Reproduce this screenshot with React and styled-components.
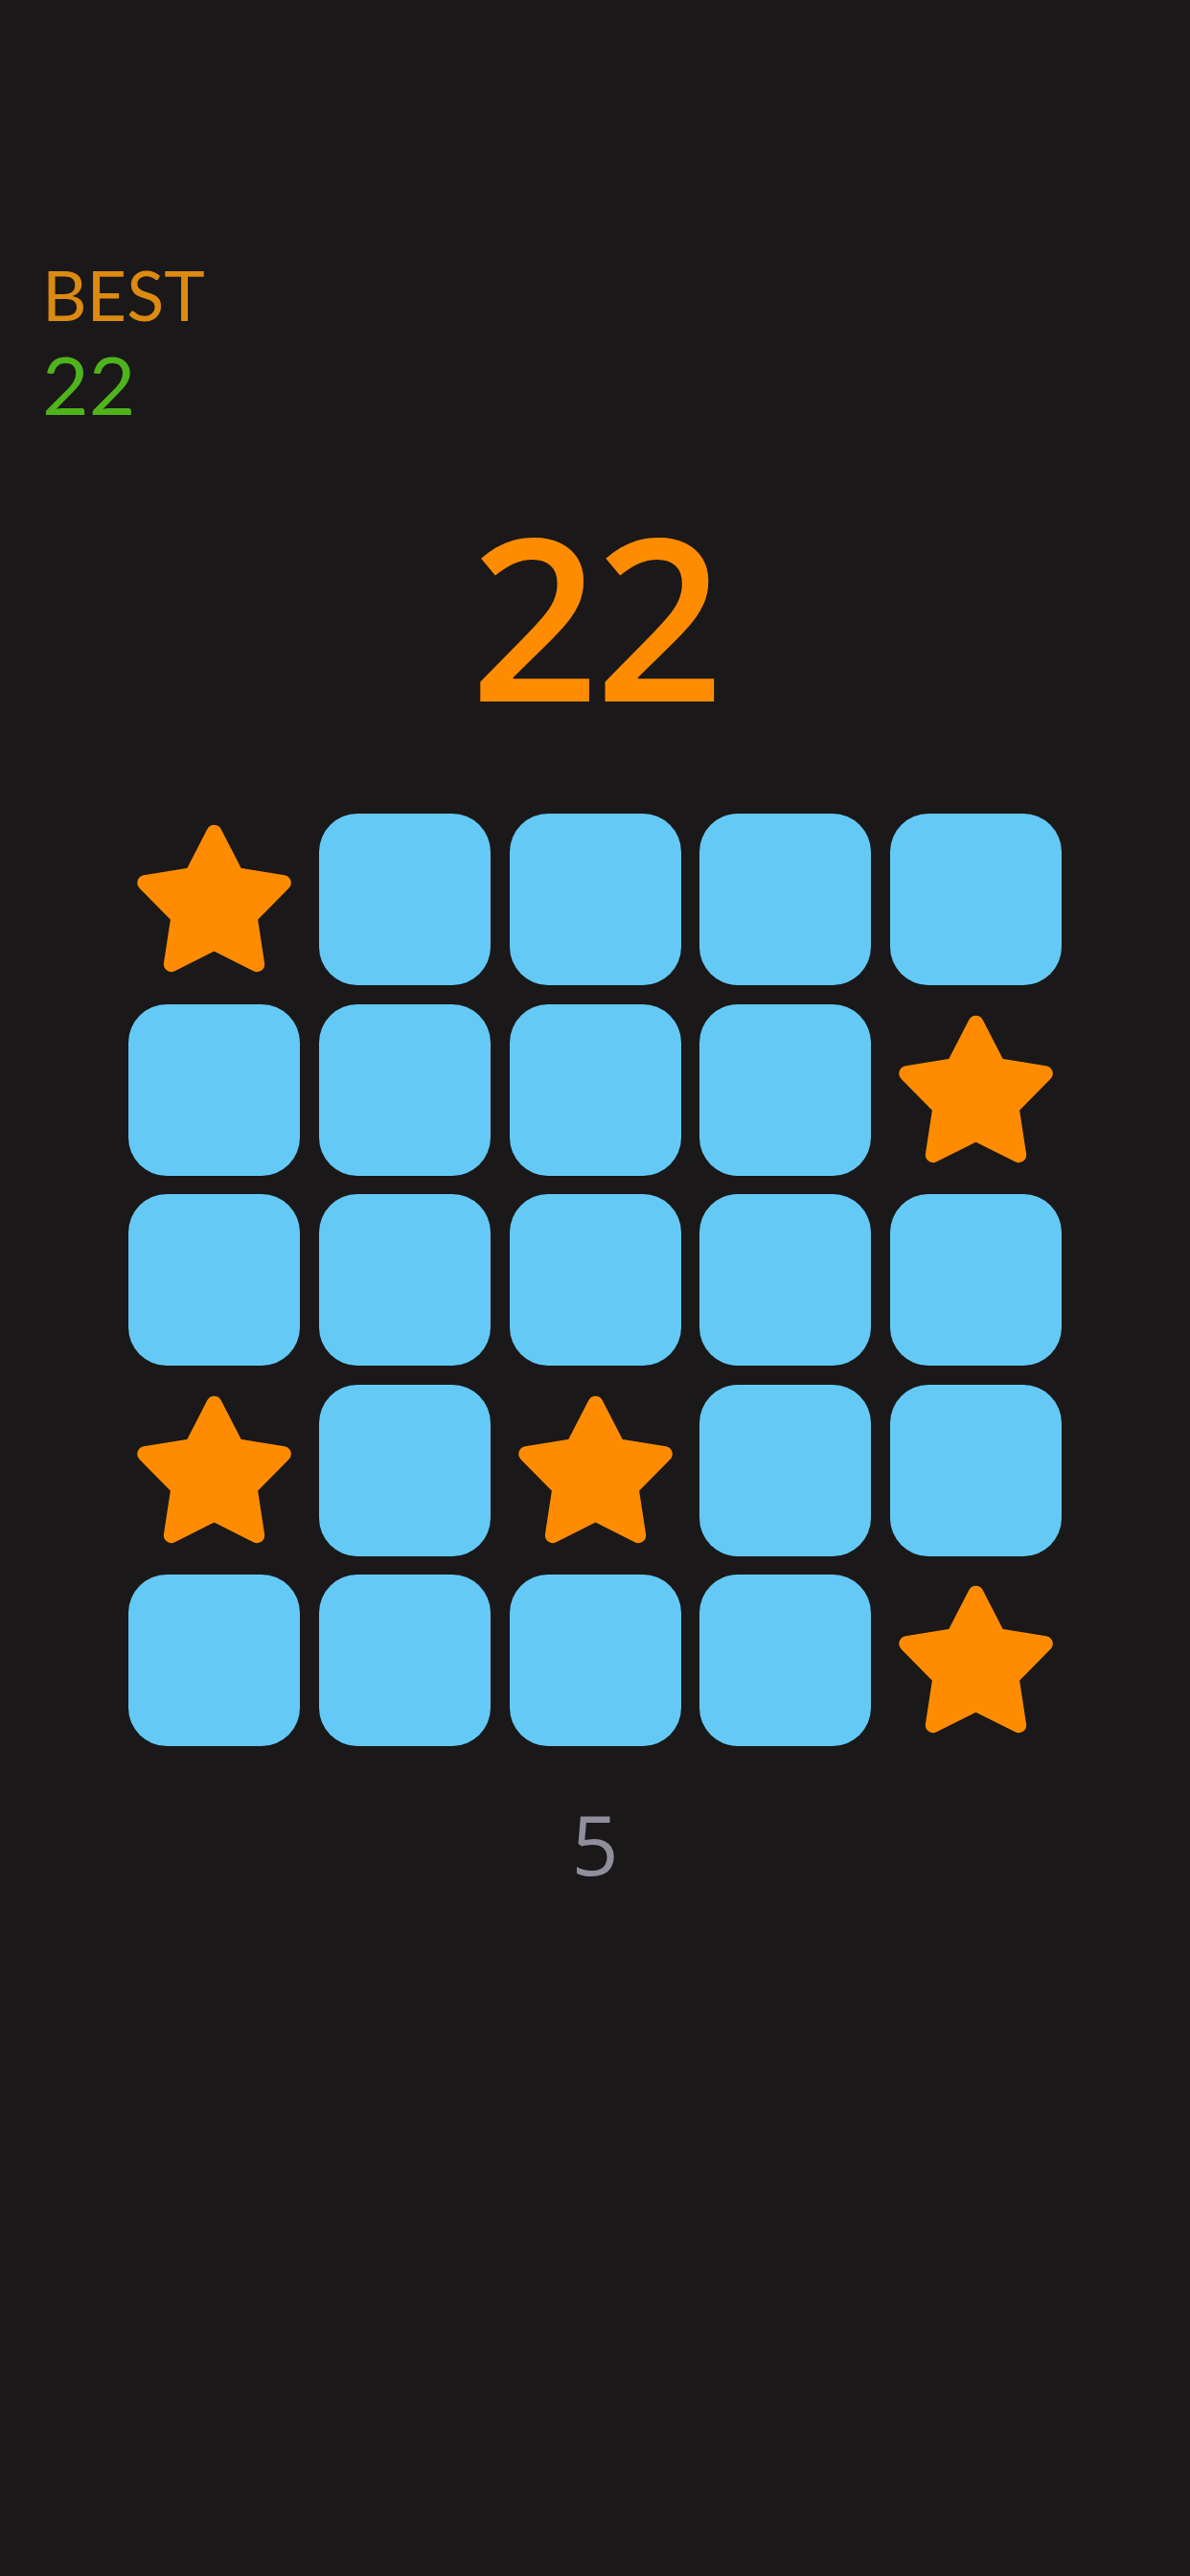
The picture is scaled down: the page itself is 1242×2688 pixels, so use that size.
import React from 'react'
import styled, { createGlobalStyle } from 'styled-components'

const Fundo = '#1a1819'
const Laranja = '#ff8c00'
const Azul = '#64caf5'

const GlobalStyle = createGlobalStyle`
  html, body {
    margin: 0;
    padding: 0;
    background: ${Fundo};
  }
  body {
    font-family: "Open Sans", "Noto Sans", "Liberation Sans", sans-serif;
  }
`

const Page = styled.div`
  width: 1242px;
  min-height: 2688px;
  background: ${Fundo};
  box-sizing: border-box;
  padding-top: 264px;
  display: flex;
  flex-direction: column;
`

const BestBox = styled.div`
  padding-left: 44px;
  display: flex;
  flex-direction: column;
  font-family: Lato, "Open Sans", sans-serif;
  font-weight: 400;
`

const BestLabel = styled.div`
  color: #dc8a12;
  font-size: 72px;
  line-height: 86px;
`

const BestValue = styled.div`
  color: #4fb31c;
  font-size: 84px;
  line-height: 101px;
`

const Score = styled.div`
  margin-top: 73px;
  text-align: center;
  color: ${Laranja};
  font-size: 235px;
  font-weight: 600;
  line-height: 234px;
  letter-spacing: -4px;
`

const Board = styled.div`
  margin: 91px auto 0;
  display: grid;
  grid-template-columns: repeat(5, 179px);
  grid-auto-rows: 179px;
  gap: 19.5px 19.75px;
`

const Cell = styled.div`
  border-radius: 40px;
  background: ${({ star }) => (star ? 'transparent' : Azul)};
  display: flex;
  align-items: center;
  justify-content: center;
`

const Moves = styled.div`
  margin-top: 52px;
  text-align: center;
  color: #8f8e9c;
  font-size: 86px;
  font-weight: 400;
  line-height: 100px;
`

const pontos = (() => {
  const cx = 89.5, cy = 95.7, R = 76, r = 39
  const out = []
  for (let i = 0; i < 10; i++) {
    const ang = (i * Math.PI) / 5
    const rad = i % 2 === 0 ? R : r
    out.push(`${(cx + rad * Math.sin(ang)).toFixed(2)},${(cy - rad * Math.cos(ang)).toFixed(2)}`)
  }
  return out.join(' ')
})()

function Estrela() {
  return (
    <svg width="179" height="179" viewBox="0 0 179 179">
      <polygon
        points={pontos}
        fill={Laranja}
        stroke={Laranja}
        strokeWidth="16"
        strokeLinejoin="round"
      />
    </svg>
  )
}

const tabuleiro = [
  'STTTT',
  'TTTTS',
  'TTTTT',
  'STSTT',
  'TTTTS',
]

export default function App() {
  return (
    <Page>
      <GlobalStyle />
      <BestBox>
        <BestLabel>BEST</BestLabel>
        <BestValue>22</BestValue>
      </BestBox>
      <Score>22</Score>
      <Board>
        {tabuleiro.map((linha, i) =>
          linha.split('').map((c, j) => (
            <Cell key={`${i}-${j}`} star={c === 'S' ? 1 : 0}>
              {c === 'S' && <Estrela />}
            </Cell>
          ))
        )}
      </Board>
      <Moves>5</Moves>
    </Page>
  )
}
